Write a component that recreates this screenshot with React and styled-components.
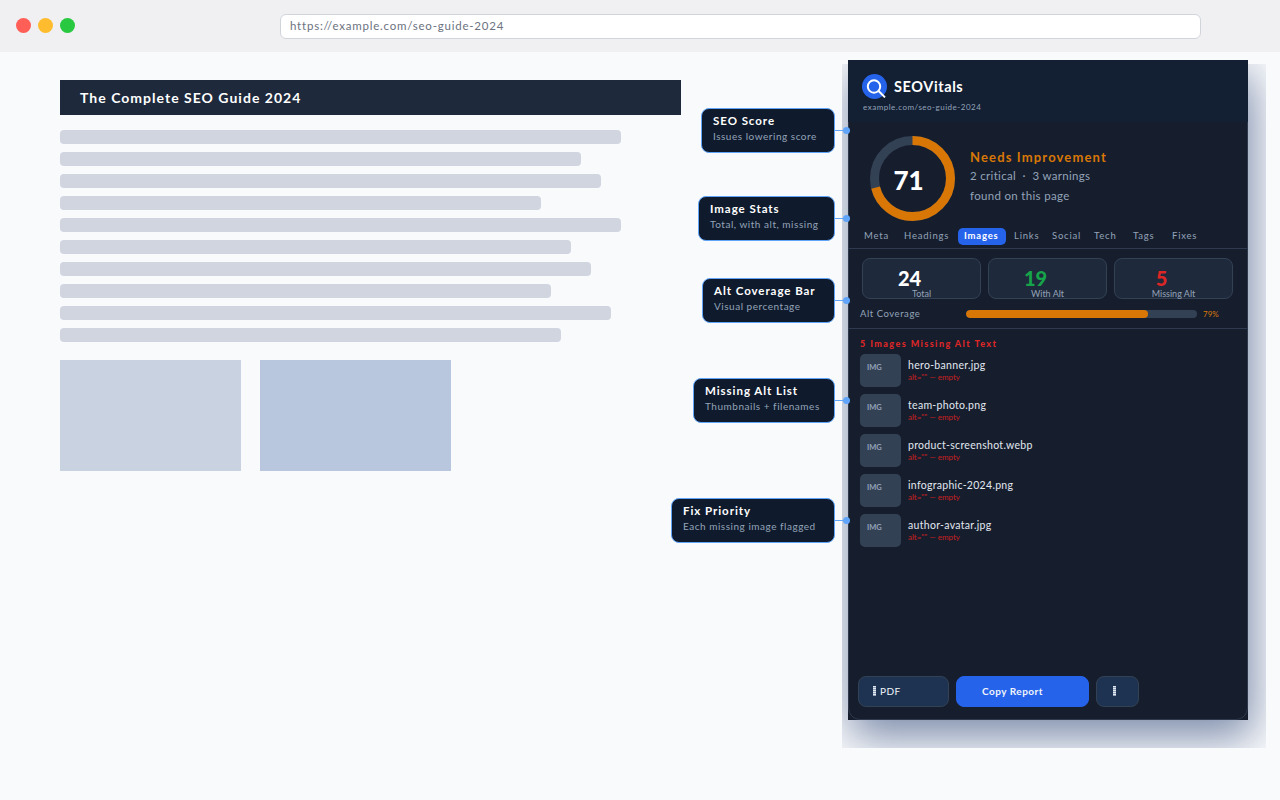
import React from 'react';
import styled, { createGlobalStyle } from 'styled-components';

const GlobalStyle = createGlobalStyle`
    html, body {
        margin: 0;
        padding: 0;
        background: #f9fafc;
    }
    body {
        font-family: "Lato", "Inter", sans-serif;
        overflow: hidden;
    }
`;

const Page = styled.div`
    width: 1280px;
    height: 800px;
    overflow: hidden;
`;

const BrowserBar = styled.div`
    height: 52px;
    background: #f0f0f2;
    display: flex;
    align-items: center;
    padding-left: 16px;
`;

const Dots = styled.div`
    display: flex;
    gap: 7px;
    width: 59px;
    margin-top: -1px;
`;

const Dot = styled.span`
    width: 15px;
    height: 15px;
    border-radius: 50%;
    background: ${p => p.$color};
`;

const AddressBar = styled.div`
    margin-left: 205px;
    width: 921px;
    height: 25px;
    box-sizing: border-box;
    background: #fff;
    border: 1px solid #d1d5db;
    border-radius: 6px;
    padding: 0 0 2px 9px;
    display: flex;
    align-items: center;
    font-size: 11.5px;
    letter-spacing: 0.78px;
    color: #6b7280;
`;

const Main = styled.div`
    display: flex;
    align-items: flex-start;
`;

const Article = styled.div`
    margin-left: 60px;
    margin-top: 28px;
    width: 621px;
    flex-shrink: 0;
`;

const ArticleTitle = styled.div`
    height: 35px;
    background: #1e293b;
    color: #fff;
    font-size: 14px;
    font-weight: 700;
    letter-spacing: 1.02px;
    padding-left: 20px;
    display: flex;
    align-items: center;
`;

const Lines = styled.div`
    margin-top: 15px;
    display: flex;
    flex-direction: column;
    gap: 8px;
`;

const TextLine = styled.div`
    height: 14px;
    border-radius: 4px;
    background: #d1d5e0;
    width: ${p => p.$width}px;
`;

const Figures = styled.div`
    margin-top: 18px;
    display: flex;
    gap: 19px;
`;

const Figure = styled.div`
    height: 111px;
    width: ${p => p.$width}px;
    background: ${p => p.$color};
`;

const Callouts = styled.div`
    width: 154px;
    flex-shrink: 0;
    padding-top: 56px;
    display: flex;
    flex-direction: column;
    align-items: flex-end;
`;

const Callout = styled.div`
    position: relative;
    box-sizing: border-box;
    height: 45px;
    width: ${p => p.$width}px;
    margin-top: ${p => p.$gap}px;
    padding: 5px 0 0 11px;
    background: #0f1b2d;
    border: 1px solid #60a5fa;
    border-radius: 8px;
    white-space: nowrap;
    z-index: 2;

    &::before {
        content: '';
        position: absolute;
        left: 100%;
        top: 21px;
        width: 12px;
        height: 1px;
        background: #60a5fa;
    }

    &::after {
        content: '';
        position: absolute;
        left: calc(100% + 9px);
        top: 18px;
        width: 7px;
        height: 7px;
        border-radius: 50%;
        background: #60a5fa;
    }
`;

const CalloutTitle = styled.div`
    font-size: 11.5px;
    font-weight: 700;
    line-height: 14px;
    letter-spacing: 0.95px;
    color: #fff;
`;

const CalloutText = styled.div`
    margin-top: 1px;
    font-size: 10px;
    line-height: 14px;
    letter-spacing: 0.52px;
    color: #94a3b8;
`;

const PanelWrap = styled.div`
    position: relative;
    margin-left: 13px;
    margin-top: 8px;
    flex-shrink: 0;
`;

const ShadowClip = styled.div`
    position: absolute;
    left: -6px;
    top: 4px;
    width: 424px;
    height: 684px;
    overflow: hidden;
`;

const ShadowCaster = styled.div`
    margin-left: 6px;
    margin-top: -4px;
    width: 400px;
    height: 660px;
    box-shadow: 4px 18px 40px rgba(30, 58, 110, 0.52), 0 0 40px rgba(30, 58, 110, 0.12);
`;

const Panel = styled.div`
    position: relative;
    width: 400px;
    height: 660px;
    background: #161e2e;
    display: flex;
    flex-direction: column;

    &::after {
        content: '';
        position: absolute;
        inset: 0;
        border: 1px solid #2d394d;
        border-radius: 12px;
        pointer-events: none;
    }
`;

const PanelHeader = styled.div`
    position: relative;
    z-index: 1;
    height: 62px;
    flex-shrink: 0;
    box-sizing: border-box;
    background: #131f33;
    padding: 14px 14px 0;
`;

const Brand = styled.div`
    display: flex;
    align-items: center;
    gap: 7px;
`;

const BrandName = styled.div`
    font-size: 14.5px;
    font-weight: 700;
    letter-spacing: 0.6px;
    color: #fff;
`;

const PanelUrl = styled.div`
    margin-top: 3px;
    margin-left: 1px;
    font-size: 8px;
    line-height: 11px;
    letter-spacing: 0.5px;
    color: #94a3b8;
`;

const ScoreRow = styled.div`
    display: flex;
    align-items: center;
    padding: 14px 0 0 22px;
    gap: 15px;
`;

const Ring = styled.div`
    position: relative;
    width: 85px;
    height: 85px;
    flex-shrink: 0;
`;

const RingValue = styled.div`
    position: absolute;
    inset: 0 8px 0 0;
    display: flex;
    align-items: center;
    justify-content: center;
    padding-top: 3px;
    font-size: 26px;
    font-weight: 900;
    color: #fff;
`;

const ScoreText = styled.div`
    display: flex;
    flex-direction: column;
    margin-top: -5px;
`;

const ScoreLabel = styled.div`
    font-size: 13px;
    font-weight: 700;
    line-height: 18px;
    letter-spacing: 1.15px;
    color: #d97706;
    padding-top: 1px;
`;

const ScoreNote = styled.div`
    font-size: 11.5px;
    line-height: 20px;
    letter-spacing: 0.32px;
    color: #94a3b8;
`;

const Tabs = styled.div`
    display: flex;
    height: 17px;
    padding: 7px 0 3px 10px;
    border-bottom: 1px solid #2d3a4f;
`;

const Tab = styled.div`
    box-sizing: border-box;
    width: ${p => p.$width}px;
    margin-right: ${p => (p.$active ? 2 : 0)}px;
    padding-left: 6px;
    border-radius: 5px;
    font-size: 9.5px;
    line-height: 15px;
    letter-spacing: 0.8px;
    font-weight: ${p => (p.$active ? 700 : 400)};
    color: ${p => (p.$active ? '#fff' : '#94a3b8')};
    background: ${p => (p.$active ? '#2563eb' : 'transparent')};
`;

const Stats = styled.div`
    display: grid;
    grid-template-columns: repeat(3, 119px);
    gap: 7px;
    padding: 9px 0 0 14px;
`;

const StatCard = styled.div`
    box-sizing: border-box;
    height: 41px;
    background: #1e293b;
    border: 1px solid #334155;
    border-radius: 8px;
    text-align: center;
    padding-top: 8px;
`;

const StatNumber = styled.div`
    font-size: 20px;
    font-weight: 900;
    line-height: 22px;
    padding-right: 24px;
    color: ${p => p.$color};
`;

const StatLabel = styled.div`
    font-size: 9px;
    line-height: 10px;
    color: #94a3b8;
`;

const CoverageRow = styled.div`
    display: flex;
    align-items: center;
    height: 29px;
    padding-left: 12px;
    border-bottom: 1px solid #2d3a4f;
`;

const CoverageLabel = styled.div`
    width: 106px;
    font-size: 9.5px;
    letter-spacing: 0.55px;
    color: #94a3b8;
`;

const Track = styled.div`
    width: 231px;
    height: 8px;
    border-radius: 4px;
    background: #334155;
    overflow: hidden;
`;

const Fill = styled.div`
    height: 100%;
    border-radius: 4px;
    background: #d97706;
`;

const CoverageValue = styled.div`
    margin-left: 6px;
    font-size: 8px;
    color: #d97706;
`;

const MissingSection = styled.div`
    padding: 9px 0 0 12px;
`;

const MissingTitle = styled.div`
    font-size: 9px;
    font-weight: 900;
    line-height: 12px;
    letter-spacing: 1.42px;
    color: #dc2626;
`;

const MissingList = styled.div`
    margin-top: 4px;
    display: flex;
    flex-direction: column;
    gap: 7px;
`;

const MissingRow = styled.div`
    display: flex;
    gap: 7px;
`;

const Thumb = styled.div`
    width: 41px;
    height: 33px;
    box-sizing: border-box;
    padding: 9px 0 0 7px;
    border-radius: 5px;
    background: #334155;
    font-size: 7.5px;
    line-height: 10px;
    font-weight: 700;
    color: #94a3b8;
`;

const FileInfo = styled.div`
    padding-top: 4px;
`;

const FileName = styled.div`
    font-size: 10.5px;
    line-height: 14px;
    letter-spacing: 0.3px;
    color: #e2e8f0;
`;

const FileNote = styled.div`
    font-size: 8px;
    line-height: 11px;
    color: #c81e1e;
`;

const Footer = styled.div`
    position: relative;
    z-index: 1;
    margin-top: auto;
    padding: 0 0 13px 10px;
    display: flex;
    gap: 7px;
`;

const FooterButton = styled.div`
    box-sizing: border-box;
    height: 31px;
    width: ${p => p.$width}px;
    padding: 0 0 2px ${p => p.$pad}px;
    display: flex;
    align-items: center;
    gap: 4px;
    border-radius: 8px;
    border: 1px solid ${p => (p.$primary ? '#2563eb' : '#334155')};
    background: ${p => (p.$primary ? '#2563eb' : '#1e3352')};
    color: #f1f5f9;
    font-size: 10px;
    letter-spacing: 0.5px;
    font-weight: ${p => (p.$primary ? 700 : 400)};
`;

const BarGlyph = styled.span`
    width: 3px;
    height: 10px;
    background: repeating-linear-gradient(to bottom, #e2e8f0 0 1px, #94a3b8 1px 2px);
`;

const LINES = [561, 521, 541, 481, 561, 511, 531, 491, 551, 501];

const CALLOUTS = [
    { title: 'SEO Score', text: 'Issues lowering score', width: 134, gap: 0 },
    { title: 'Image Stats', text: 'Total, with alt, missing', width: 137, gap: 43 },
    { title: 'Alt Coverage Bar', text: 'Visual percentage', width: 133, gap: 37 },
    { title: 'Missing Alt List', text: 'Thumbnails + filenames', width: 142, gap: 55 },
    { title: 'Fix Priority', text: 'Each missing image flagged', width: 164, gap: 75 },
];

const TABS = [
    { name: 'Meta', width: 40 },
    { name: 'Headings', width: 60 },
    { name: 'Images', width: 48, active: true },
    { name: 'Links', width: 38 },
    { name: 'Social', width: 42 },
    { name: 'Tech', width: 39 },
    { name: 'Tags', width: 39 },
    { name: 'Fixes', width: 40 },
];

const STATS = [
    { value: 24, label: 'Total', color: '#fff' },
    { value: 19, label: 'With Alt', color: '#16a34a' },
    { value: 5, label: 'Missing Alt', color: '#dc2626' },
];

const FILES = [
    'hero-banner.jpg',
    'team-photo.png',
    'product-screenshot.webp',
    'infographic-2024.png',
    'author-avatar.jpg',
];

const Logo = () => (
    <svg width="25" height="25" viewBox="0 0 25 25">
        <circle cx="12.5" cy="12.5" r="12.5" fill="#2563eb" />
        <circle cx="12" cy="12.5" r="6.2" fill="none" stroke="#fff" strokeWidth="2" />
        <line x1="16.6" y1="17" x2="23" y2="23.4" stroke="#fff" strokeWidth="2" />
    </svg>
);

const ScoreRing = ({ score }) => {
    const radius = 38;
    const length = 2 * Math.PI * radius;
    return (
        <svg width="85" height="85" viewBox="0 0 85 85">
            <circle cx="42.5" cy="42.5" r={radius} fill="none" stroke="#334155" strokeWidth="9" />
            <circle
                cx="42.5"
                cy="42.5"
                r={radius}
                fill="none"
                stroke="#d97706"
                strokeWidth="9"
                strokeDasharray={`${(length * score) / 100} ${length}`}
                transform="rotate(-90 42.5 42.5)"
            />
        </svg>
    );
};

const App = () => (
    <Page>
        <GlobalStyle />
        <BrowserBar>
            <Dots>
                <Dot $color="#ff5f57" />
                <Dot $color="#febc2e" />
                <Dot $color="#28c840" />
            </Dots>
            <AddressBar>https://example.com/seo-guide-2024</AddressBar>
        </BrowserBar>
        <Main>
            <Article>
                <ArticleTitle>The Complete SEO Guide 2024</ArticleTitle>
                <Lines>
                    {LINES.map((width, index) => <TextLine key={index} $width={width} />)}
                </Lines>
                <Figures>
                    <Figure $width={181} $color="#c8d2e0" />
                    <Figure $width={191} $color="#b8c7de" />
                </Figures>
            </Article>
            <Callouts>
                {CALLOUTS.map(item => (
                    <Callout key={item.title} $width={item.width} $gap={item.gap}>
                        <CalloutTitle>{item.title}</CalloutTitle>
                        <CalloutText>{item.text}</CalloutText>
                    </Callout>
                ))}
            </Callouts>
            <PanelWrap>
                <ShadowClip>
                    <ShadowCaster />
                </ShadowClip>
                <Panel>
                    <PanelHeader>
                        <Brand>
                            <Logo />
                            <BrandName>SEOVitals</BrandName>
                        </Brand>
                        <PanelUrl>example.com/seo-guide-2024</PanelUrl>
                    </PanelHeader>
                    <ScoreRow>
                        <Ring>
                            <ScoreRing score={71} />
                            <RingValue>71</RingValue>
                        </Ring>
                        <ScoreText>
                            <ScoreLabel>Needs Improvement</ScoreLabel>
                            <ScoreNote>2 critical &nbsp;·&nbsp; 3 warnings</ScoreNote>
                            <ScoreNote>found on this page</ScoreNote>
                        </ScoreText>
                    </ScoreRow>
                    <Tabs>
                        {TABS.map(tab => (
                            <Tab key={tab.name} $width={tab.width} $active={tab.active}>{tab.name}</Tab>
                        ))}
                    </Tabs>
                    <Stats>
                        {STATS.map(stat => (
                            <StatCard key={stat.label}>
                                <StatNumber $color={stat.color}>{stat.value}</StatNumber>
                                <StatLabel>{stat.label}</StatLabel>
                            </StatCard>
                        ))}
                    </Stats>
                    <CoverageRow>
                        <CoverageLabel>Alt Coverage</CoverageLabel>
                        <Track>
                            <Fill style={{ width: '79%' }} />
                        </Track>
                        <CoverageValue>79%</CoverageValue>
                    </CoverageRow>
                    <MissingSection>
                        <MissingTitle>5 Images Missing Alt Text</MissingTitle>
                        <MissingList>
                            {FILES.map(file => (
                                <MissingRow key={file}>
                                    <Thumb>IMG</Thumb>
                                    <FileInfo>
                                        <FileName>{file}</FileName>
                                        <FileNote>alt="" — empty</FileNote>
                                    </FileInfo>
                                </MissingRow>
                            ))}
                        </MissingList>
                    </MissingSection>
                    <Footer>
                        <FooterButton $width={91} $pad={14}>
                            <BarGlyph />
                            PDF
                        </FooterButton>
                        <FooterButton $width={133} $pad={25} $primary>Copy Report</FooterButton>
                        <FooterButton $width={43} $pad={16}>
                            <BarGlyph />
                        </FooterButton>
                    </Footer>
                </Panel>
            </PanelWrap>
        </Main>
    </Page>
);

export default App;
